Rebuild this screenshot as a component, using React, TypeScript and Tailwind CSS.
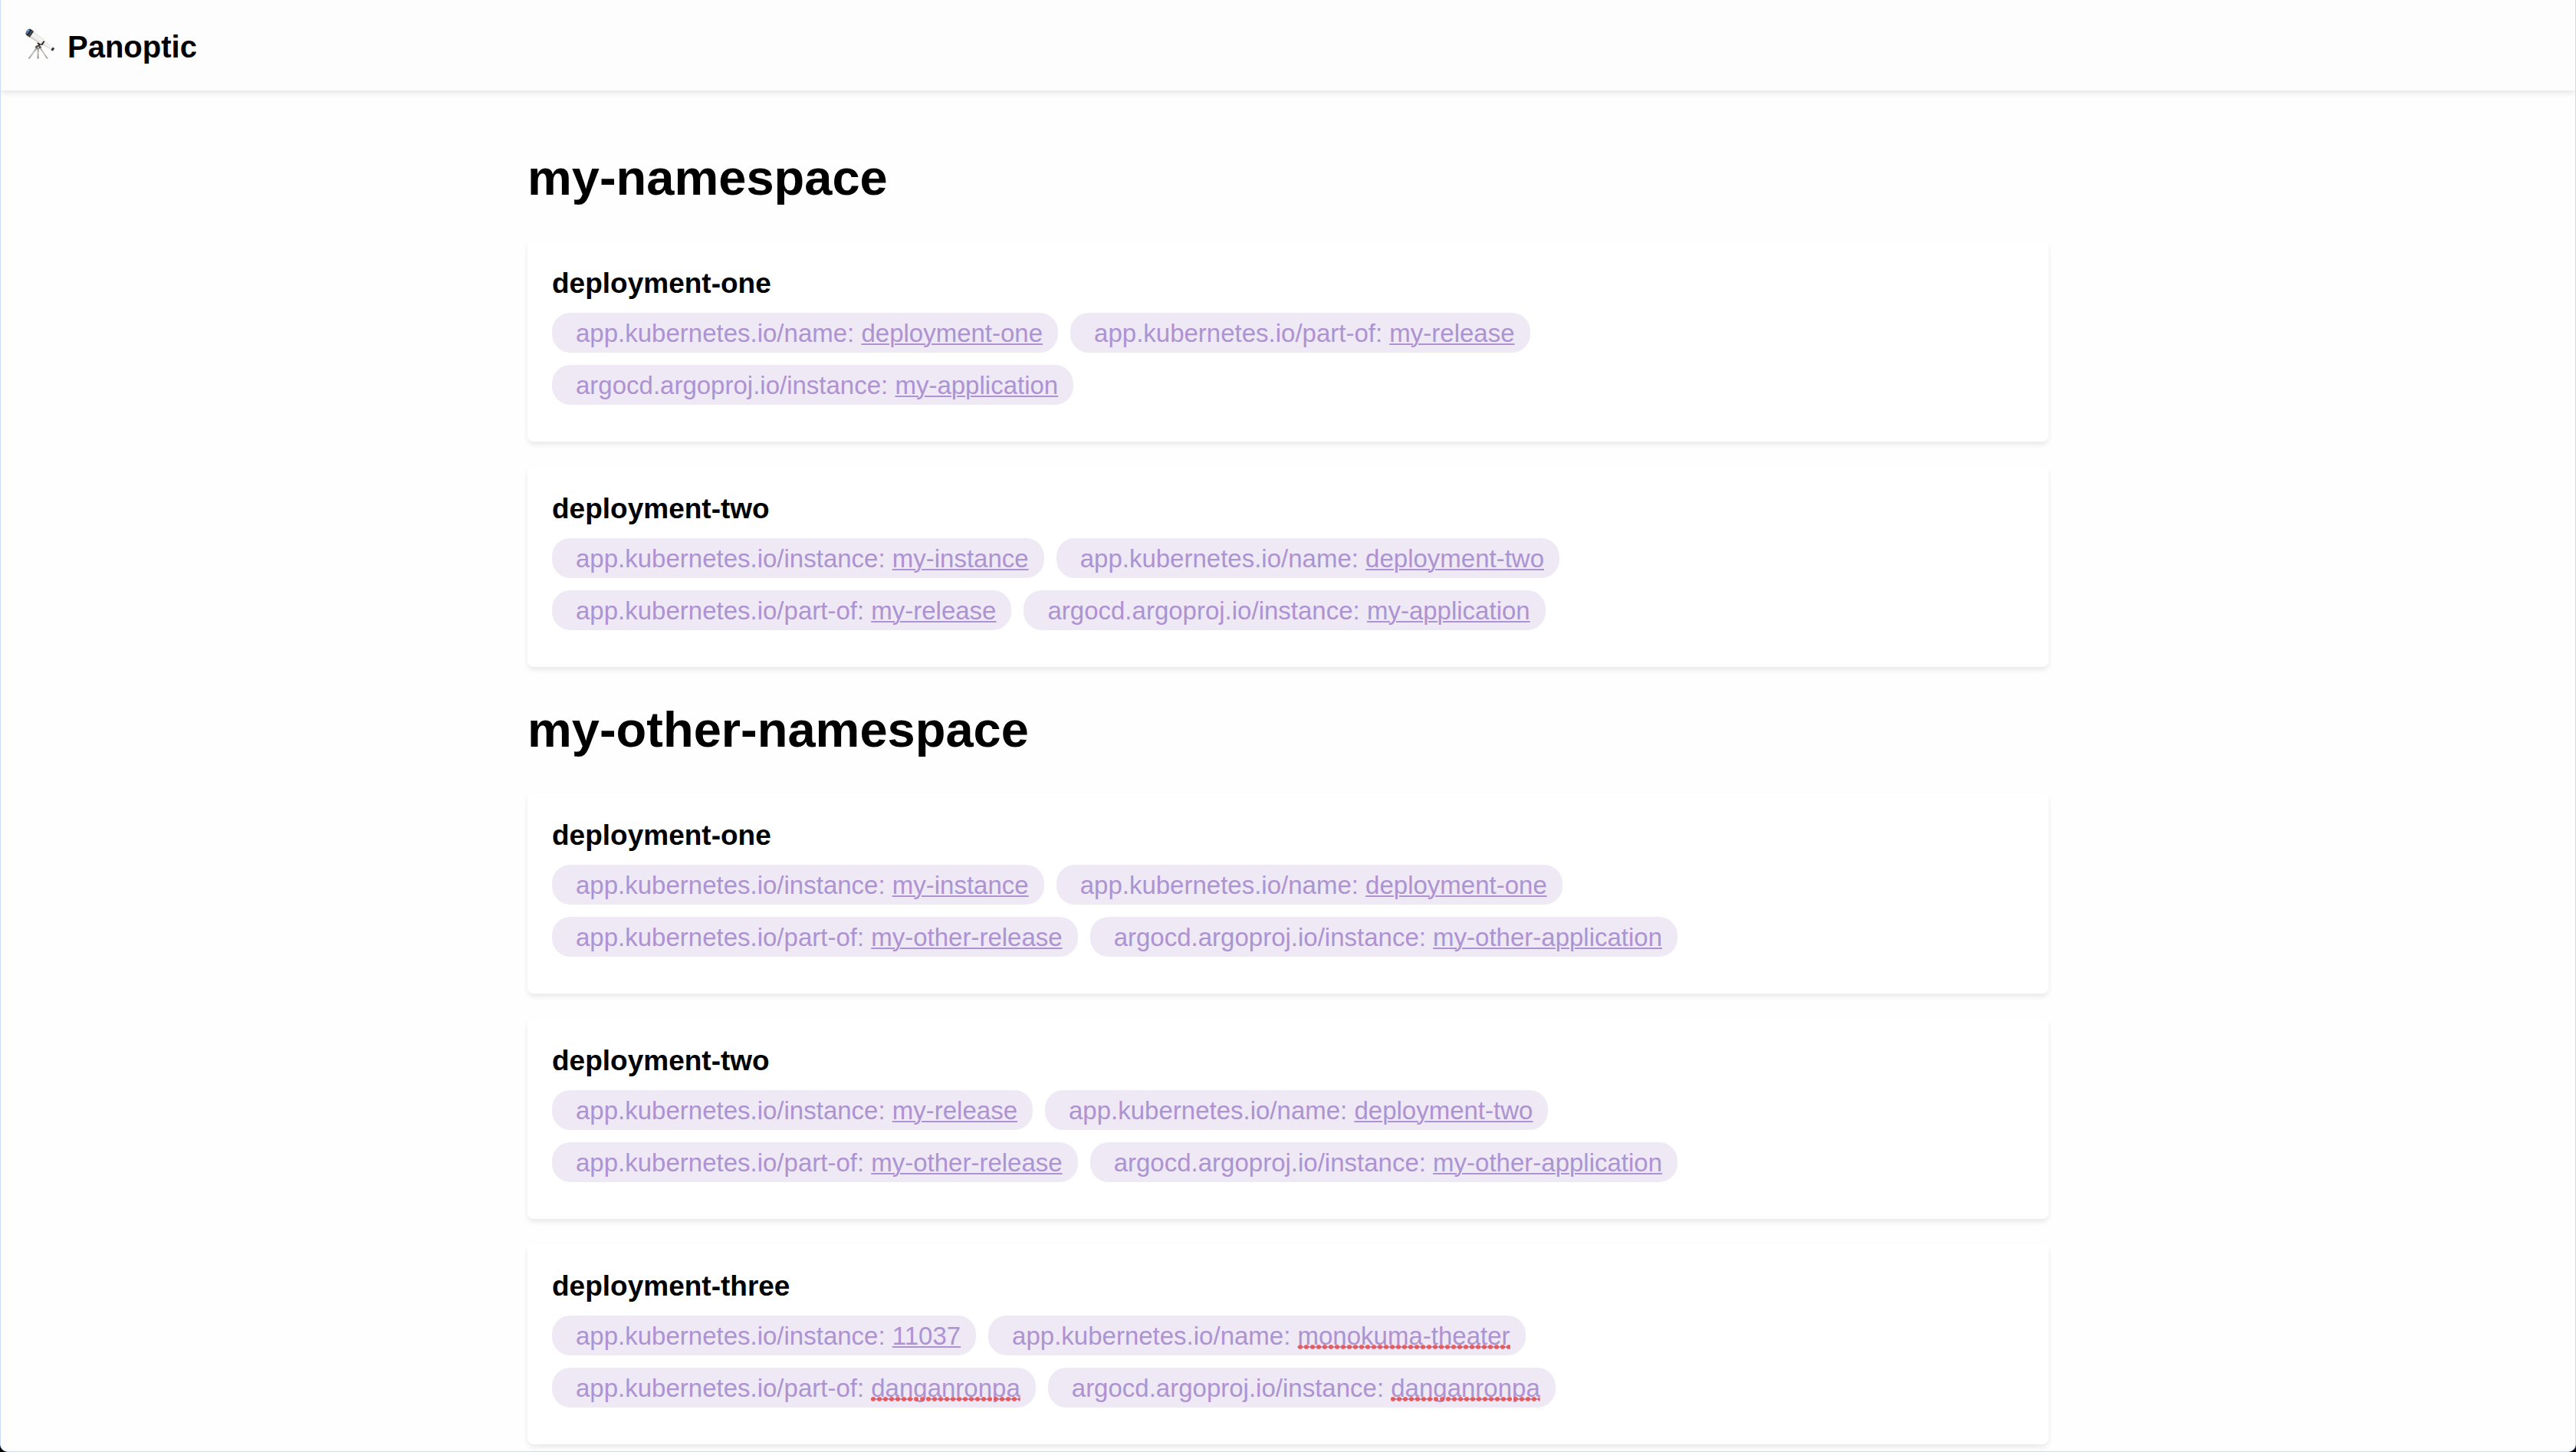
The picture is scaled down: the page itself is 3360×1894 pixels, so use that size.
type Label = { name: string; value: string; misspelt?: boolean };
type Deployment = { name: string; labels: Label[] };
type Namespace = { name: string; deployments: Deployment[] };

const INSTANCE = "app.kubernetes.io/instance";
const NAME = "app.kubernetes.io/name";
const PART_OF = "app.kubernetes.io/part-of";
const ARGO = "argocd.argoproj.io/instance";

const namespaces: Namespace[] = [
  {
    name: "my-namespace",
    deployments: [
      {
        name: "deployment-one",
        labels: [
          { name: NAME, value: "deployment-one" },
          { name: PART_OF, value: "my-release" },
          { name: ARGO, value: "my-application" },
        ],
      },
      {
        name: "deployment-two",
        labels: [
          { name: INSTANCE, value: "my-instance" },
          { name: NAME, value: "deployment-two" },
          { name: PART_OF, value: "my-release" },
          { name: ARGO, value: "my-application" },
        ],
      },
    ],
  },
  {
    name: "my-other-namespace",
    deployments: [
      {
        name: "deployment-one",
        labels: [
          { name: INSTANCE, value: "my-instance" },
          { name: NAME, value: "deployment-one" },
          { name: PART_OF, value: "my-other-release" },
          { name: ARGO, value: "my-other-application" },
        ],
      },
      {
        name: "deployment-two",
        labels: [
          { name: INSTANCE, value: "my-release" },
          { name: NAME, value: "deployment-two" },
          { name: PART_OF, value: "my-other-release" },
          { name: ARGO, value: "my-other-application" },
        ],
      },
      {
        name: "deployment-three",
        labels: [
          { name: INSTANCE, value: "11037" },
          { name: NAME, value: "monokuma-theater", misspelt: true },
          { name: PART_OF, value: "danganronpa", misspelt: true },
          { name: ARGO, value: "danganronpa", misspelt: true },
        ],
      },
    ],
  },
];

function Telescope() {
  return (
    <svg viewBox="0 0 40 48" className="h-12 w-10" aria-hidden="true">
      <defs>
        <linearGradient id="tube" x1="0" y1="0" x2="0" y2="1">
          <stop offset="0" stopColor="#e4e1de" />
          <stop offset="0.4" stopColor="#f8f6f4" />
          <stop offset="0.8" stopColor="#e6e2de" />
          <stop offset="1" stopColor="#aaa5a0" />
        </linearGradient>
        <linearGradient id="leg" x1="0" y1="0" x2="0" y2="1">
          <stop offset="0" stopColor="#8f8b88" />
          <stop offset="0.5" stopColor="#cbc8c5" />
          <stop offset="1" stopColor="#9c9996" />
        </linearGradient>
      </defs>
      <path d="M15.5 24 L4.5 39.5 H6.8 L17 26 Z" fill="url(#leg)" />
      <path d="M19 25 L28.8 39.5 H31 L20.5 24 Z" fill="url(#leg)" />
      <path d="M16.5 25 H18.8 V39.5 H16.3 Z" fill="url(#leg)" />
      <path d="M13.5 24.5 L16 22 H19.5 L22.5 24.5 L19 26.5 H16.5 Z" fill="#55514f" />
      <circle cx="17.8" cy="25" r="1" fill="#f5f3f0" />
      <path d="M16 18.5 L22 19 L24.5 21 L18.5 22.5 Z" fill="#2a2828" />
      <g transform="translate(4 4) rotate(35)">
        <path d="M23 -3.4 L40 -2 V2 L23 3.2 Z" fill="url(#tube)" />
        <rect x="38.6" y="-2.2" width="3" height="4.6" rx="1" fill="#3a3838" />
        <path d="M6 -4.6 L25 -3.8 V3.8 L6 4.8 Z" fill="url(#tube)" />
        <path d="M24 -2 H26 V4 H24 Z" fill="#2e2c2c" />
        <rect x="0" y="-4.8" width="6.6" height="9.6" rx="1" fill="#2c2c30" />
        <rect x="4.2" y="-4.8" width="0.9" height="9.6" fill="#6c6a6e" />
        <ellipse cx="0.4" cy="0" rx="1.8" ry="4" fill="#3c4f74" />
        <ellipse cx="0.2" cy="-1.4" rx="0.9" ry="1.6" fill="#5cc3d8" />
        <ellipse cx="0.4" cy="1.6" rx="0.9" ry="1.4" fill="#8577d8" />
      </g>
    </svg>
  );
}

function Chip({ name, value, misspelt }: Label) {
  return (
    <li className="mr-4 mb-4 rounded-3xl bg-[#eee9f5] pt-0.5 pr-5 pl-[31px] text-[33px] leading-[50px] text-[#ad93d1]">
      {name}:{" "}
      <a href="#" className="relative inline-block underline decoration-2 underline-offset-2">
        {value}
        {misspelt && (
          <svg className="absolute bottom-2 left-0 h-1.5 w-full" aria-hidden="true">
            <defs>
              <pattern id="dots" width="8" height="6" patternUnits="userSpaceOnUse">
                <circle cx="3" cy="3" r="3" fill="#e8504c" fillOpacity="0.85" />
              </pattern>
            </defs>
            <rect width="100%" height="6" fill="url(#dots)" />
          </svg>
        )}
      </a>
    </li>
  );
}

function DeploymentCard({ name, labels }: Deployment) {
  return (
    <article className="rounded-lg bg-white px-8 pt-8 pb-8 shadow-[0_4px_6px_rgba(0,0,0,0.07),0_4px_12px_rgba(0,0,0,0.02)]">
      <h3 className="mb-3.5 text-[37px] leading-[48px] font-bold">{name}</h3>
      <ul className="flex flex-wrap">
        {labels.map((label) => (
          <Chip key={label.name} {...label} />
        ))}
      </ul>
    </article>
  );
}

export default function App() {
  return (
    <div className="relative h-screen overflow-hidden bg-black font-['Liberation_Sans',Arial,sans-serif] text-black">
      <div className="h-full overflow-hidden rounded-b-[10px] border-x border-b border-[#c9d9f8] bg-[#fefefe]">
        <header className="flex h-[118px] items-center gap-4 bg-[#fdfdfd] px-[31px] pt-1 shadow-[0_4px_6px_rgba(0,0,0,0.07),0_4px_12px_rgba(0,0,0,0.02)]">
          <Telescope />
          <h1 className="text-[40px] leading-[48px] font-bold">Panoptic</h1>
        </header>
        <main className="mx-auto max-w-[2048px] px-8 pt-8">
          {namespaces.map((namespace) => (
            <section key={namespace.name}>
              <h2 className="py-[42px] text-[65px] leading-[80px] font-bold">{namespace.name}</h2>
              <div className="flex flex-col gap-8">
                {namespace.deployments.map((deployment) => (
                  <DeploymentCard key={deployment.name} {...deployment} />
                ))}
              </div>
            </section>
          ))}
        </main>
      </div>
    </div>
  );
}
